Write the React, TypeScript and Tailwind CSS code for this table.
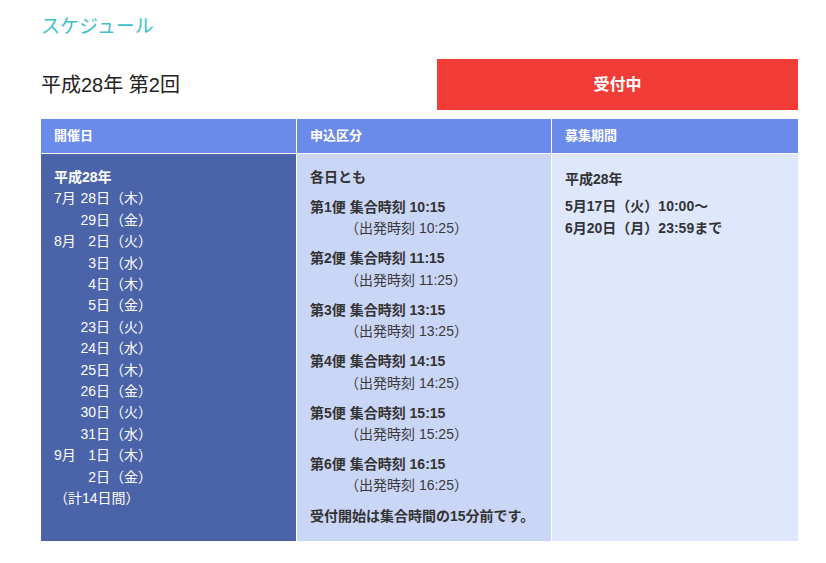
export default function App() {
  const font = { fontFamily: '"Liberation Sans", "Noto Sans CJK JP", sans-serif' }

  const dates = [
    { m: '7月', d: '28日', w: '（木）' },
    { m: '', d: '29日', w: '（金）' },
    { m: '8月', d: '2日', w: '（火）' },
    { m: '', d: '3日', w: '（水）' },
    { m: '', d: '4日', w: '（木）' },
    { m: '', d: '5日', w: '（金）' },
    { m: '', d: '23日', w: '（火）' },
    { m: '', d: '24日', w: '（水）' },
    { m: '', d: '25日', w: '（木）' },
    { m: '', d: '26日', w: '（金）' },
    { m: '', d: '30日', w: '（火）' },
    { m: '', d: '31日', w: '（水）' },
    { m: '9月', d: '1日', w: '（木）' },
    { m: '', d: '2日', w: '（金）' },
  ]

  const flights = [
    { n: '第1便', meet: '10:15', dep: '10:25' },
    { n: '第2便', meet: '11:15', dep: '11:25' },
    { n: '第3便', meet: '13:15', dep: '13:25' },
    { n: '第4便', meet: '14:15', dep: '14:25' },
    { n: '第5便', meet: '15:15', dep: '15:25' },
    { n: '第6便', meet: '16:15', dep: '16:25' },
  ]

  return (
    <div className="min-h-screen bg-white pl-[41px] pr-[28px] pt-[14px]" style={font}>
      <h2 className="text-[19px] leading-[26px] text-[#3fc1c9]">スケジュール</h2>

      <div className="mt-[19px] flex items-center justify-between">
        <div className="text-[20px] leading-[28px] text-[#222]">平成28年 第2回</div>
        <div className="flex h-[51px] w-[361px] items-center justify-center bg-[#f13c37] text-[16px] font-bold text-white">
          受付中
        </div>
      </div>

      <div className="mt-[9px] w-[757px]">
        <div className="grid h-[35px] grid-cols-[255px_255px_1fr] border-b border-white bg-[#6b8bea] text-[13px] font-bold text-white">
          <div className="flex items-center pl-[13px]">開催日</div>
          <div className="flex items-center border-l border-white pl-[13px]">申込区分</div>
          <div className="flex items-center border-l border-white pl-[13px]">募集期間</div>
        </div>

        <div className="grid grid-cols-[255px_255px_1fr] text-[14px]">
          <div className="bg-[#4b63a8] pl-[13px] pt-[13px] text-white leading-[21.4px]">
            <div className="font-bold">平成28年</div>
            {dates.map((x, i) => (
              <div key={i} className="flex">
                <span className="w-[23px]">{x.m}</span>
                <span className="w-[33px] text-right">{x.d}</span>
                <span>{x.w}</span>
              </div>
            ))}
            <div>（計14日間）</div>
          </div>

          <div className="border-l border-white bg-[#cad6f6] pb-[13px] pt-[13px] pl-[13px] leading-[21.4px] text-[#333]">
            <div className="font-bold">各日とも</div>
            {flights.map((f) => (
              <div key={f.n} className="mt-[8.6px]">
                <div className="font-bold">
                  {f.n} 集合時刻 {f.meet}
                </div>
                <div className="pl-[35px] text-[#3a3a3a]">（出発時刻 {f.dep}）</div>
              </div>
            ))}
            <div className="mt-[9.6px] font-bold">受付開始は集合時間の15分前です。</div>
          </div>

          <div className="border-l border-white bg-[#dee7fc] pl-[13px] pt-[15px] font-bold leading-[21.4px] text-[#333]">
            <div className="mb-[6px]">平成28年</div>
            <div>5月17日（火）10:00〜</div>
            <div>6月20日（月）23:59まで</div>
          </div>
        </div>
      </div>
    </div>
  )
}
